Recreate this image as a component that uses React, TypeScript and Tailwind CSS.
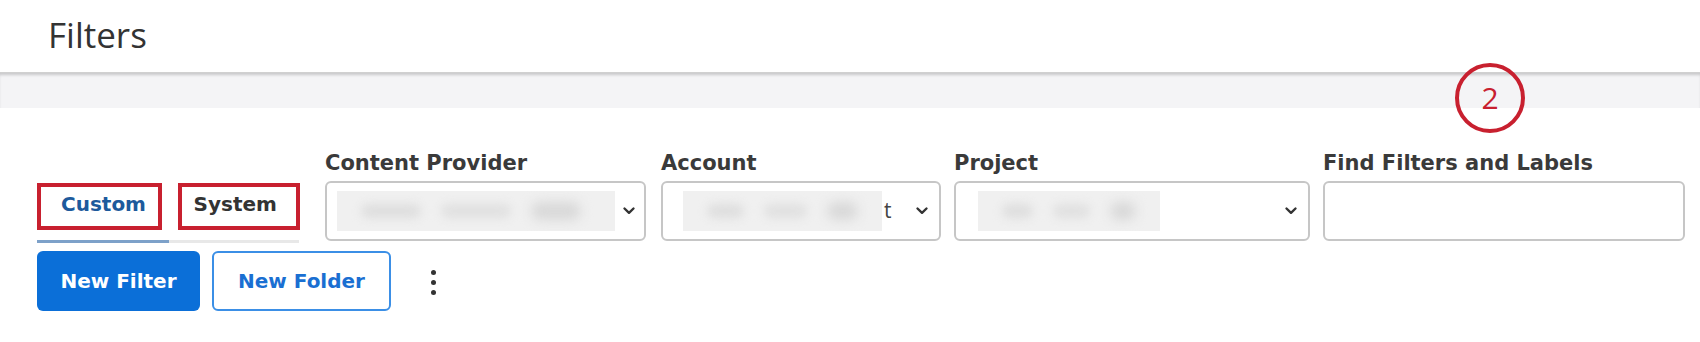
import React from "react";

function Chevron() {
  return (
    <svg width="14" height="10" viewBox="0 0 14 10" className="shrink-0">
      <path d="M2.5 2.5 L7 6.8 L11.5 2.5" fill="none" stroke="#333" strokeWidth="2.4" strokeLinecap="round" strokeLinejoin="round" />
    </svg>
  );
}

function Blur({ w }: { w: number }) {
  return (
    <div className="h-[40px] bg-[#f0f0f0] flex items-center gap-5 px-6 overflow-hidden" style={{ width: w }}>
      <div className="h-[14px] w-[60px] rounded-full bg-[#dedede] blur-[5px]" />
      <div className="h-[14px] w-[70px] rounded-full bg-[#e0e0e0] blur-[5px]" />
      <div className="h-[18px] w-[50px] rounded-full bg-[#d8d8d8] blur-[6px]" />
    </div>
  );
}

const bold = { fontFamily: '"DejaVu Sans", "Open Sans", sans-serif' };

function Field({ label, width, children }: { label: string; width: string; children?: React.ReactNode }) {
  return (
    <div className={`flex flex-col ${width}`}>
      <div className="text-[21px] leading-[26px] font-bold text-[#3a3a3a] mb-[5px] whitespace-nowrap" style={bold}>{label}</div>
      <div className="h-[60px] border-2 border-[#c6c6c6] rounded-[6px] bg-white flex items-center">{children}</div>
    </div>
  );
}

export default function App() {
  return (
    <div className="w-[1700px] h-[342px] bg-white relative overflow-hidden" style={{ fontFamily: '"Open Sans", "Noto Sans", sans-serif' }}>
      <div className="h-[72px] flex items-center pl-[48px]">
        <span className="text-[35px] text-[#333] leading-none -mt-[3px]">Filters</span>
      </div>
      <div className="h-[36px] bg-[#f4f4f6] shadow-[inset_0_3px_3px_-1px_rgba(0,0,0,0.18)] border-t border-[#d0d0d0]" />

      <div className="pl-[37px] pt-[42px]">
        <div className="flex items-end">
          <div className="w-[263px] mr-[25px] flex flex-col mb-[-2px]">
            <div className="flex gap-[16px]">
              <div className="w-[128px] h-[47px] border-[4px] border-[#c8202f] flex items-center pl-[20px]">
                <span className="text-[20px] font-bold text-[#1d5a9c] -mt-[6px]" style={bold}>Custom</span>
              </div>
              <div className="w-[126px] h-[47px] border-[4px] border-[#c8202f] flex items-center pl-[12px]">
                <span className="text-[20px] font-bold text-[#333] -mt-[6px]" style={bold}>System</span>
              </div>
            </div>
            <div className="flex mt-[10px] h-[3px]">
              <div className="w-[132px] bg-[#7da1c9]" />
              <div className="w-[130px] bg-[#e8e8e8]" />
            </div>
          </div>

          <Field label="Content Provider" width="w-[321px]">
            <div className="flex items-center w-full pl-[10px] pr-[8px] justify-between">
              <Blur w={278} />
              <Chevron />
            </div>
          </Field>
          <div className="w-[15px]" />
          <Field label="Account" width="w-[280px]">
            <div className="flex items-center w-full pl-[20px] pr-[10px]">
              <Blur w={199} />
              <span className="text-[21px] text-[#444] ml-[2px]">t</span>
              <div className="flex-1" />
              <Chevron />
            </div>
          </Field>
          <div className="w-[13px]" />
          <Field label="Project" width="w-[356px]">
            <div className="flex items-center w-full pl-[22px] pr-[10px]">
              <Blur w={182} />
              <div className="flex-1" />
              <Chevron />
            </div>
          </Field>
          <div className="w-[13px]" />
          <Field label="Find Filters and Labels" width="w-[362px]" />
        </div>

        <div className="flex items-center mt-[10px]">
          <button className="w-[163px] h-[60px] rounded-[6px] bg-[#0b6fd8] text-white text-[20px] font-bold" style={bold}>New Filter</button>
          <button className="ml-[12px] w-[179px] h-[60px] rounded-[6px] border-2 border-[#3b8fe6] bg-white text-[#1a6fd2] text-[20px] font-bold" style={bold}>New Folder</button>
          <div className="ml-[40px] flex flex-col gap-[5px] items-center mt-[2px]">
            <div className="w-[5px] h-[5px] rounded-full bg-[#333]" />
            <div className="w-[5px] h-[5px] rounded-full bg-[#333]" />
            <div className="w-[5px] h-[5px] rounded-full bg-[#333]" />
          </div>
        </div>
      </div>

      <div className="absolute left-[1455px] top-[63px] w-[70px] h-[70px] rounded-full border-[4px] border-[#c8202f] flex items-center justify-center">
        <span className="text-[30px] text-[#c8202f] leading-none">2</span>
      </div>
    </div>
  );
}
